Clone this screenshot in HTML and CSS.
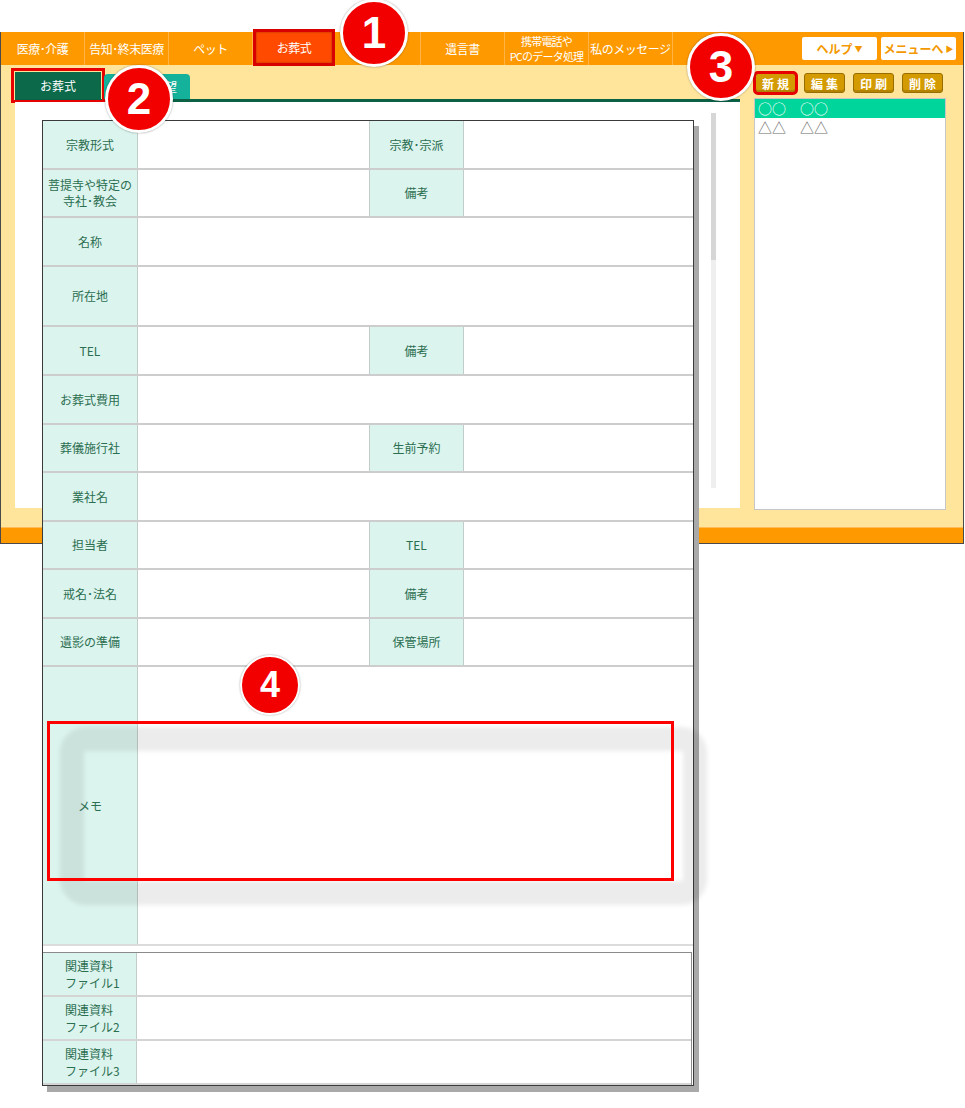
FILE: index.html
```html
<!DOCTYPE html>
<html lang="ja">
<head>
    <meta charset="UTF-8">
    <title>お葬式</title>
    <link rel="stylesheet" href="styles.css">
</head>
<body>
<div class="page">

    <!-- background: the app window -->
    <div class="app">
        <div class="nav">
            <div class="nav-item">医療･介護</div>
            <div class="nav-item">告知･終末医療</div>
            <div class="nav-item">ペット</div>
            <div class="nav-item active">お葬式</div>
            <div class="nav-item"></div>
            <div class="nav-item">遺言書</div>
            <div class="nav-item small">携帯電話や<br>PCのデータ処理</div>
            <div class="nav-item">私のメッセージ</div>
            <div class="nav-btns">
                <div class="nav-btn">ヘルプ<span class="arrow">▼</span></div>
                <div class="nav-btn">メニューへ<span class="arrow">▶</span></div>
            </div>
        </div>

        <div class="main">
            <div class="left-col">
                <div class="tabs">
                    <div class="tab current">お葬式</div>
                    <div class="tab other">お墓の希望</div>
                </div>
                <div class="panel">
                    <div class="scrollbar"><div class="thumb"></div></div>
                </div>
            </div>
            <div class="right-col">
                <div class="btn-row">
                    <div class="btn marked">新規</div>
                    <div class="btn">編集</div>
                    <div class="btn">印刷</div>
                    <div class="btn">削除</div>
                </div>
                <div class="list">
                    <div class="list-row selected">○○　○○</div>
                    <div class="list-row">△△　△△</div>
                </div>
            </div>
        </div>

        <div class="footer"></div>
    </div>

    <!-- the form sheet laid over the window -->
    <div class="sheet">
        <div class="row h49">
            <div class="label">宗教形式</div><div class="value"></div>
            <div class="label label2">宗教･宗派</div><div class="value"></div>
        </div>
        <div class="row h48">
            <div class="label">菩提寺や特定の<br>寺社･教会</div><div class="value"></div>
            <div class="label label2">備考</div><div class="value"></div>
        </div>
        <div class="row h49">
            <div class="label">名称</div><div class="value wide"></div>
        </div>
        <div class="row h60">
            <div class="label">所在地</div><div class="value wide"></div>
        </div>
        <div class="row h49">
            <div class="label">TEL</div><div class="value"></div>
            <div class="label label2">備考</div><div class="value"></div>
        </div>
        <div class="row h49">
            <div class="label">お葬式費用</div><div class="value wide"></div>
        </div>
        <div class="row h48">
            <div class="label">葬儀施行社</div><div class="value"></div>
            <div class="label label2">生前予約</div><div class="value"></div>
        </div>
        <div class="row h49">
            <div class="label">業社名</div><div class="value wide"></div>
        </div>
        <div class="row h48">
            <div class="label">担当者</div><div class="value"></div>
            <div class="label label2">TEL</div><div class="value"></div>
        </div>
        <div class="row h49">
            <div class="label">戒名･法名</div><div class="value"></div>
            <div class="label label2">備考</div><div class="value"></div>
        </div>
        <div class="row h48">
            <div class="label">遺影の準備</div><div class="value"></div>
            <div class="label label2">保管場所</div><div class="value"></div>
        </div>
        <div class="row memo">
            <div class="label">メモ</div><div class="value wide"></div>
        </div>

        <div class="files">
            <div class="file-row">
                <div class="file-label">関連資料<br>ファイル1</div><div class="value"></div>
            </div>
            <div class="file-row">
                <div class="file-label">関連資料<br>ファイル2</div><div class="value"></div>
            </div>
            <div class="file-row">
                <div class="file-label">関連資料<br>ファイル3</div><div class="value"></div>
            </div>
        </div>
    </div>

    <!-- annotations -->
    <div class="memo-glow"></div>
    <div class="memo-mark"></div>
    <div class="num n1">1</div>
    <div class="num n2">2</div>
    <div class="num n3">3</div>
    <div class="num n4">4</div>
</div>
</body>
</html>
```

FILE: styles.css
```css
body {
    margin: 0;
    background-color: #fff;
    font-family: "Noto Sans CJK JP", "Noto Sans", sans-serif;
}

.page {
    position: relative;
    width: 965px;
    height: 1108px;
    overflow: hidden;
}

/* ---- app window ---- */
.app {
    margin-top: 32px;
    width: 964px;
    box-sizing: border-box;
    border-left: 1px solid #4a4a4a;
    border-right: 1px solid #4a4a4a;
    border-bottom: 1px solid #4a4a4a;
    background-color: #ffe49c;
}

.nav {
    display: flex;
    height: 33px;
    background-color: #fe9900;
}

.nav-item {
    width: 84px;
    height: 33px;
    box-sizing: border-box;
    border-right: 1px solid #ffb445;
    display: flex;
    align-items: center;
    justify-content: center;
    text-align: center;
    white-space: nowrap;
    color: #fff;
    font-size: 12px;
    line-height: 14px;
    letter-spacing: -0.5px;
}

.nav-item.small {
    font-size: 11px;
    line-height: 15px;
    letter-spacing: -0.8px;
}

.nav-item.active {
    align-self: flex-start;
    width: 82px;
    height: 37px;
    margin-top: -3px;
    margin-right: 2px;
    border: 3px solid #d80000;
    background-color: #ff4a00;
    box-shadow: inset 0 0 2px rgba(0, 0, 0, 0.4);
}

.nav-btns {
    margin-left: auto;
    display: flex;
    align-items: center;
    gap: 4px;
    padding-right: 7px;
}

.nav-btn {
    width: 75px;
    height: 23px;
    background-color: #fff;
    border-radius: 2px;
    color: #f39800;
    font-size: 12px;
    font-weight: bold;
    display: flex;
    align-items: center;
    justify-content: center;
}

.nav-btn .arrow {
    font-size: 8px;
    margin-left: 2px;
}

.main {
    display: flex;
    gap: 14px;
    height: 462px;
    box-sizing: border-box;
    padding: 7px 16px 17px 14px;
}

.left-col {
    width: 725px;
    display: flex;
    flex-direction: column;
    padding-bottom: 2px;
}

.tabs {
    display: flex;
    align-items: flex-end;
    gap: 3px;
    height: 30px;
    box-sizing: border-box;
    border-bottom: 3px solid #0b6146;
}

.tab {
    width: 86px;
    display: flex;
    align-items: center;
    justify-content: center;
    color: #fff;
    font-size: 12px;
}

.tab.current {
    height: 27px;
    background-color: #0c6a4a;
    outline: 3px solid #e60000;
    outline-offset: 1px;
}

.tab.other {
    height: 25px;
    background-color: #15b29b;
    border-radius: 4px 4px 0 0;
}

.panel {
    flex: 1;
    background-color: #fff;
    display: flex;
    justify-content: flex-end;
    padding: 11px 24px 20px 0;
}

.scrollbar {
    width: 5px;
    background-color: #efefef;
}

.scrollbar .thumb {
    height: 147px;
    background-color: #d6d6d6;
}

.right-col {
    width: 192px;
    display: flex;
    flex-direction: column;
    padding-top: 1px;
}

.btn-row {
    display: flex;
    gap: 8px;
    padding-left: 1px;
}

.btn {
    width: 41px;
    height: 20px;
    box-sizing: border-box;
    background-color: #d39b00;
    border: 1px solid #9a6d00;
    border-radius: 3px;
    box-shadow: inset 0 -2px 0 rgba(0, 0, 0, 0.15);
    color: #fff;
    font-size: 12px;
    font-weight: bold;
    letter-spacing: 3px;
    text-indent: 3px;
    display: flex;
    align-items: center;
    justify-content: center;
}

.btn.marked {
    outline: 3px solid #e60000;
    outline-offset: -1px;
}

.list {
    flex: 1;
    margin-top: 5px;
    background-color: #fff;
    border: 1px solid #c6c6c6;
}

.list-row {
    height: 19px;
    line-height: 19px;
    padding-left: 3px;
    font-size: 14px;
    color: #6a6a6a;
}

.list-row.selected {
    background-color: #00d59b;
    color: #fff;
}

.footer {
    height: 16px;
    box-sizing: border-box;
    border-top: 1px solid #ffbb55;
    background-color: #fe9900;
}

/* ---- form sheet ---- */
.sheet {
    position: absolute;
    left: 42px;
    top: 120px;
    width: 652px;
    box-sizing: border-box;
    border: 1px solid #3a3a3a;
    background-color: #fff;
    box-shadow: 5px 6px 0 #a9a9a9;
}

.row {
    display: grid;
    grid-template-columns: 95px 231px 95px 1fr;
    box-sizing: border-box;
    border-bottom: 2px solid #cdcdcd;
}

.h48 { height: 48px; }
.h49 { height: 49px; }
.h60 { height: 60px; }

.row.memo {
    height: 279px;
    border-bottom-color: #dcdcdc;
    margin-bottom: 6px;
}

.label {
    background-color: #dcf4ee;
    border-right: 1px solid #c2cdc9;
    color: #2b6e50;
    font-size: 12px;
    line-height: 16px;
    text-align: center;
    display: flex;
    align-items: center;
    justify-content: center;
}

.label2 {
    border-left: 1px solid #c2cdc9;
}

.value {
    background-color: #fff;
}

.value.wide {
    grid-column: span 3;
}

.files {
    margin-right: 1px;
    border-top: 1px solid #8a8a8a;
    border-right: 1px solid #8a8a8a;
}

.file-row {
    display: grid;
    grid-template-columns: 94px 1fr;
    height: 44px;
    box-sizing: border-box;
    border-bottom: 2px solid #d4d4d4;
}

.file-label {
    background-color: #dcf4ee;
    border-right: 1px solid #c2cdc9;
    color: #2b6e50;
    font-size: 12px;
    line-height: 17px;
    padding-left: 22px;
    display: flex;
    flex-direction: column;
    justify-content: center;
}

/* ---- annotations ---- */
.memo-glow {
    position: absolute;
    left: 60px;
    top: 727px;
    width: 647px;
    height: 178px;
    box-sizing: border-box;
    border: 24px solid rgba(0, 0, 0, 0.075);
    border-radius: 26px;
    filter: blur(2px);
}

.memo-mark {
    position: absolute;
    left: 47px;
    top: 721px;
    width: 627px;
    height: 160px;
    box-sizing: border-box;
    border: 3px solid #ff0000;
}

.num {
    position: absolute;
    width: 68px;
    height: 68px;
    box-sizing: border-box;
    border: 3px solid #fff;
    border-radius: 50%;
    background-color: #f20000;
    box-shadow: 0 0 2px rgba(0, 0, 0, 0.4);
    color: #fff;
    font-family: "Liberation Sans", Arial, sans-serif;
    font-weight: bold;
    font-size: 44px;
    display: flex;
    align-items: center;
    justify-content: center;
}

.n1 { left: 340px; top: -1px; }
.n2 { left: 105px; top: 65px; }
.n3 { left: 687px; top: 33px; }

.n4 {
    left: 240px;
    top: 655px;
    width: 60px;
    height: 60px;
    border-width: 2px;
    font-size: 36px;
}
```
